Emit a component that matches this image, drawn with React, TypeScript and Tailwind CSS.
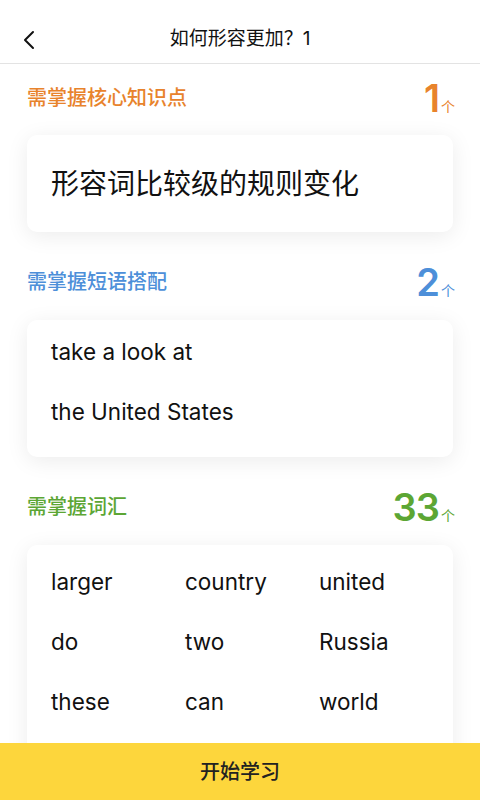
const PHRASES = ["take a look at", "the United States"];

const WORDS = [
  "larger", "country", "united",
  "do", "two", "Russia",
  "these", "can", "world",
];

const FONT = "font-['Inter','Noto_Sans_CJK_SC',sans-serif]";

function SectionHeader({ title, count, color }: { title: string; count: number; color: string }) {
  return (
    <div className="flex items-center justify-between h-9 pl-[27px] pr-[25px]">
      <span className={`text-[20px] font-medium ${color}`}>{title}</span>
      <span className={`flex items-baseline ${color}`}>
        <span className="text-[38px] font-semibold leading-none tracking-tight">{count}</span>
        <span className="text-[14px] ml-[2px] leading-none">个</span>
      </span>
    </div>
  );
}

export default function App() {
  return (
    <div className={`w-[480px] h-[800px] bg-white flex flex-col overflow-hidden ${FONT}`}>
      {/* header */}
      <div className="h-16 shrink-0 pt-4 flex items-center border-b border-[#e3e3e3]">
        <div className="w-16 flex items-center pl-[22px]">
          <svg width="16" height="20" viewBox="0 0 16 20" fill="none" stroke="#111" strokeWidth="2" strokeLinecap="round" strokeLinejoin="round">
            <polyline points="11,2 3,10 11,18" />
          </svg>
        </div>
        <div className="flex-1 text-center pr-16 text-[19px] text-[#111]">如何形容更加？1</div>
      </div>

      <div className="flex-1 overflow-hidden">
        <div className="mt-4 mb-[19px]">
          <SectionHeader title="需掌握核心知识点" count={1} color="text-[#e8832c]" />
        </div>
        <div className="mx-[27px] h-[97px] rounded-[10px] bg-white shadow-[0_4px_22px_rgba(0,0,0,0.08)] flex items-center px-6">
          <span className="text-[28px] text-[#111]">形容词比较级的规则变化</span>
        </div>

        <div className="mt-8 mb-5">
          <SectionHeader title="需掌握短语搭配" count={2} color="text-[#4d8fd9]" />
        </div>
        <div className="mx-[27px] rounded-[10px] bg-white shadow-[0_4px_22px_rgba(0,0,0,0.08)] pt-3 pb-[25px] px-6 flex flex-col gap-5">
          {PHRASES.map((p) => (
            <div key={p} className="text-[22.5px] leading-10 text-[#111]">{p}</div>
          ))}
        </div>

        <div className="mt-8 mb-5">
          <SectionHeader title="需掌握词汇" count={33} color="text-[#5ca634]" />
        </div>
        <div className="mx-[27px] rounded-[10px] bg-white shadow-[0_4px_22px_rgba(0,0,0,0.08)] pt-[7px] pb-16 px-6">
          <div className="grid grid-cols-[134px_134px_1fr]">
            {WORDS.map((w, i) => (
              <div key={i} className="h-[60px] flex items-center text-[22.5px] text-[#111]">{w}</div>
            ))}
          </div>
        </div>
      </div>

      {/* bottom button */}
      <div className="h-[57px] shrink-0 bg-[#fdd63c] flex items-center justify-center text-[20px] font-medium text-[#222]">
        开始学习
      </div>
    </div>
  );
}
